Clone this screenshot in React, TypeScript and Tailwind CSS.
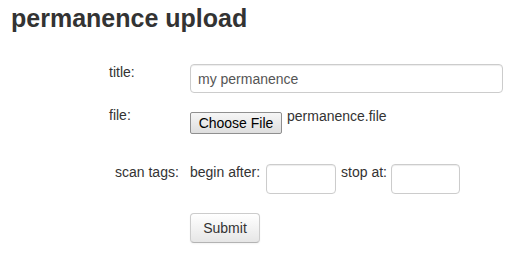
import React from "react";

export default function App() {
  return (
    <div
      className="min-h-[258px] w-[516px] bg-white text-[#333] text-[14px]"
      style={{ fontFamily: '"Liberation Sans", Arial, sans-serif' }}
    >
      <h1 className="pl-[11px] pt-[3px] text-[25px] font-bold leading-[30px]">
        permanence upload
      </h1>

      <form className="mt-[31px] flex flex-col pl-[100px]">
        <div className="flex items-start">
          <label className="-mt-[2px] w-[90px] pl-[9px] leading-[20px]">title:</label>
          <input
            type="text"
            defaultValue="my permanence"
            className="h-[29px] w-[313px] rounded-[4px] border border-[#ccc] px-[7px] text-[14px] text-[#555] shadow-[inset_0_1px_1px_rgba(0,0,0,0.075)] outline-none"
          />
        </div>

        <div className="mt-[17px] flex items-start">
          <label className="-mt-[5px] w-[90px] pl-[9px] leading-[20px]">file:</label>
          <div className="flex items-start">
            <span className="mt-[2px] flex h-[22px] w-[92px] items-center justify-center rounded-[2px] border border-[#8f8f8f] bg-gradient-to-b from-[#f6f6f6] to-[#dedede] text-[14px] leading-[20px] text-black">
              Choose File
            </span>
            <span className="-mt-[4px] ml-[5px] leading-[20px]">permanence.file</span>
          </div>
        </div>

        <div className="mt-[30px] flex items-start">
          <label className="-mt-[2px] w-[90px] pl-[15px] leading-[20px]">scan tags:</label>
          <span className="-mt-[2px] leading-[20px]">begin after:</span>
          <input
            type="text"
            className="ml-[6px] h-[30px] w-[70px] rounded-[4px] border border-[#ccc] px-[7px] shadow-[inset_0_1px_1px_rgba(0,0,0,0.075)] outline-none"
          />
          <span className="-mt-[2px] ml-[5px] leading-[20px]">stop at:</span>
          <input
            type="text"
            className="ml-[4px] h-[30px] w-[69px] rounded-[4px] border border-[#ccc] px-[7px] shadow-[inset_0_1px_1px_rgba(0,0,0,0.075)] outline-none"
          />
        </div>

        <div className="mt-[19px] flex pl-[90px]">
          <button
            type="button"
            className="h-[30px] w-[70px] rounded-[4px] border border-[#ccc] border-b-[#b3b3b3] bg-gradient-to-b from-white to-[#e6e6e6] text-[14px] leading-[20px] text-[#333] shadow-[inset_0_1px_0_rgba(255,255,255,0.2),0_1px_2px_rgba(0,0,0,0.05)]"
          >
            Submit
          </button>
        </div>
      </form>
    </div>
  );
}
